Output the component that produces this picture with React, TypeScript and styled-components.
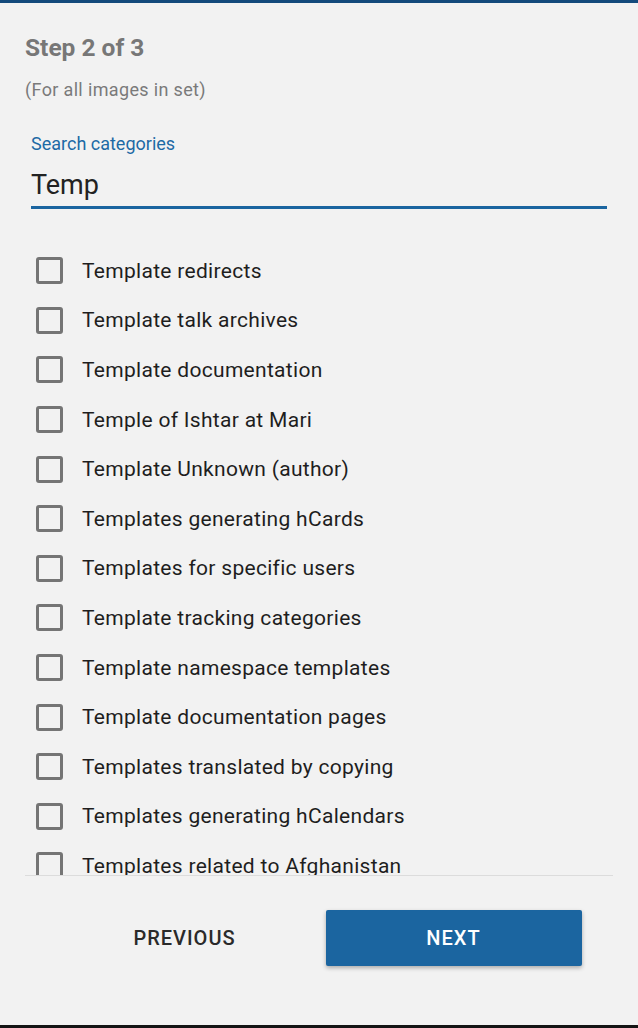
import React from "react";
import styled, { createGlobalStyle } from "styled-components";

const Global = createGlobalStyle`
  html, body { margin: 0; padding: 0; background: #f2f2f2; }
  body { font-family: Roboto, "Noto Sans", sans-serif; }
  * { box-sizing: border-box; }
`;

const Page = styled.div`
  height: 1028px;
  display: flex;
  flex-direction: column;
  border-top: 3px solid #134a7c;
  border-bottom: 3px solid #141414;
  background: #f2f2f2;
  overflow: hidden;
`;

const Header = styled.div`
  padding: 32px 25px 0;
  display: flex;
  flex-direction: column;
`;

const Title = styled.div`
  font-size: 24.5px;
  line-height: 26px;
  font-weight: 700;
  color: #777777;
`;

const Subtitle = styled.div`
  margin-top: 18px;
  font-size: 18px;
  line-height: 22px;
  letter-spacing: 0.35px;
  color: #7a7a7a;
`;

const Field = styled.div`
  margin: 32px 31px 0;
  display: flex;
  flex-direction: column;
`;

const FieldLabel = styled.label`
  font-size: 18px;
  line-height: 22px;
  color: #1d6aa5;
`;

const FieldInput = styled.div`
  margin-top: 14px;
  font-size: 27px;
  line-height: 32px;
  color: #222222;
  padding-bottom: 5px;
  border-bottom: 3px solid #1b65a0;
`;

const List = styled.div`
  margin: 37px 25px 0;
  height: 630px;
  overflow: hidden;
  border-bottom: 1px solid #dcdcdc;
`;

const Row = styled.div`
  height: 49.6px;
  display: flex;
  align-items: center;
  padding-left: 11px;
  gap: 19px;
`;

const Box = styled.span`
  width: 27px;
  height: 27px;
  flex: none;
  border: 3px solid #757575;
  border-radius: 3px;
`;

const Label = styled.span`
  font-size: 21px;
  letter-spacing: 0.3px;
  color: #1e1e1e;
  white-space: nowrap;
`;

const Footer = styled.div`
  display: flex;
  justify-content: center;
  gap: 13px;
  padding-top: 34px;
`;

const Button = styled.button<{ $primary?: boolean }>`
  width: 256px;
  height: 56px;
  border: none;
  border-radius: 2px;
  font-family: Roboto, "Noto Sans", sans-serif;
  font-size: 20px;
  letter-spacing: 1px;
  font-weight: 500;
  text-transform: uppercase;
  background: ${(p) => (p.$primary ? "#1b65a0" : "transparent")};
  color: ${(p) => (p.$primary ? "#ffffff" : "#2a2a2a")};
  box-shadow: ${(p) => (p.$primary ? "0 2px 4px rgba(0,0,0,0.3)" : "none")};
`;

const items = [
  "Template redirects",
  "Template talk archives",
  "Template documentation",
  "Temple of Ishtar at Mari",
  "Template Unknown (author)",
  "Templates generating hCards",
  "Templates for specific users",
  "Template tracking categories",
  "Template namespace templates",
  "Template documentation pages",
  "Templates translated by copying",
  "Templates generating hCalendars",
  "Templates related to Afghanistan",
];

export default function App() {
  return (
    <>
      <Global />
      <Page>
        <Header>
          <Title>Step 2 of 3</Title>
          <Subtitle>(For all images in set)</Subtitle>
        </Header>
        <Field>
          <FieldLabel>Search categories</FieldLabel>
          <FieldInput>Temp</FieldInput>
        </Field>
        <List>
          {items.map((t) => (
            <Row key={t}>
              <Box />
              <Label>{t}</Label>
            </Row>
          ))}
        </List>
        <Footer>
          <Button>Previous</Button>
          <Button $primary>Next</Button>
        </Footer>
      </Page>
    </>
  );
}
